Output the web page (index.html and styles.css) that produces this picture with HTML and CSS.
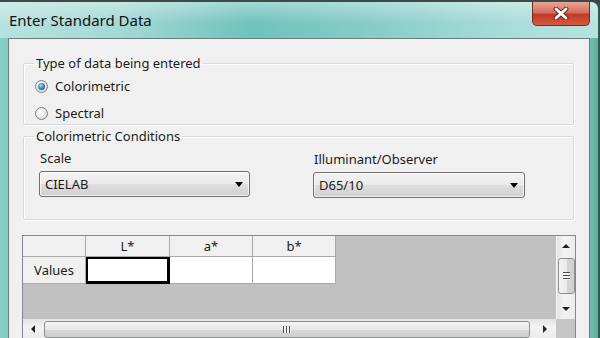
FILE: index.html
```html
<!DOCTYPE html>
<html lang="en">

<head>
    <meta charset="UTF-8">
    <meta name="viewport" content="width=device-width, initial-scale=1.0">
    <title>Enter Standard Data</title>
    <link rel="stylesheet" href="styles.css">
</head>

<body>
    <div class="window">
        <div class="titlebar">
            <span class="title">Enter Standard Data</span>
            <button class="close">
                <svg width="16" height="13" viewBox="0 0 16 13">
                    <path d="M3 2 L13 11 M13 2 L3 11" stroke="#6b2a22" stroke-width="4.8" stroke-linecap="round" />
                    <path d="M3 2 L13 11 M13 2 L3 11" stroke="#ffffff" stroke-width="2.8" stroke-linecap="round" />
                </svg>
            </button>
        </div>

        <div class="client">
            <fieldset class="group type-group">
                <legend>Type of data being entered</legend>
                <label class="radio-row"><span class="radio checked"></span>Colorimetric</label>
                <label class="radio-row"><span class="radio"></span>Spectral</label>
            </fieldset>

            <fieldset class="group cond-group">
                <legend>Colorimetric Conditions</legend>
                <div class="fields">
                    <div class="field">
                        <div class="field-label">Scale</div>
                        <div class="combo">CIELAB<span class="caret"></span></div>
                    </div>
                    <div class="field second">
                        <div class="field-label">Illuminant/Observer</div>
                        <div class="combo">D65/10<span class="caret"></span></div>
                    </div>
                </div>
            </fieldset>

            <div class="grid">
                <div class="sheet">
                    <div class="cells">
                        <div class="cell head"></div>
                        <div class="cell head">L*</div>
                        <div class="cell head">a*</div>
                        <div class="cell head">b*</div>
                        <div class="cell head row-head">Values</div>
                        <div class="cell value selected"></div>
                        <div class="cell value"></div>
                        <div class="cell value"></div>
                    </div>
                </div>
                <div class="vscroll">
                    <span class="arrow up"></span>
                    <div class="vthumb"><span class="grip-v"></span></div>
                    <span class="arrow down"></span>
                </div>
                <div class="hscroll">
                    <span class="arrow left"></span>
                    <div class="hthumb"><span class="grip-h"></span></div>
                    <span class="arrow right"></span>
                </div>
                <div class="corner"></div>
            </div>
        </div>
    </div>
</body>

</html>
```

FILE: styles.css
```css
* {
    margin: 0;
    padding: 0;
    box-sizing: border-box;
}

body {
    width: 600px;
    height: 338px;
    overflow: hidden;
    background: #3a4848;
    font-family: "Noto Sans", "Open Sans", sans-serif;
    font-size: 13px;
    color: #1b1b1b;
}

.window {
    height: 345px;
    display: flex;
    flex-direction: column;
    border-top: 2px solid #3c4a4a;
    border-right: 2px solid #2c5a4e;
    border-top-right-radius: 9px;
    background: linear-gradient(to right, #86cfc6 0%, #7ccac1 2%, #93d4cd 50%, #8bd3cb 97%, #5fae9f 100%);
}

/* title bar */
.titlebar {
    height: 36px;
    display: flex;
    align-items: flex-start;
    padding: 0 8px 0 9px;
    background:
        linear-gradient(to bottom, rgba(255, 255, 255, 0.35), rgba(255, 255, 255, 0) 60%),
        linear-gradient(to right, #b8e2df 0%, #a4d9d5 20%, #6fc2bd 42%, #84cbc7 60%, #a9dcd9 85%, #b6e3e0 100%);
    border-top-right-radius: 7px;
}

.title {
    margin-top: 9px;
    font-size: 15px;
    line-height: 18px;
    color: #111;
}

.close {
    margin-left: auto;
    width: 58px;
    height: 24px;
    display: flex;
    align-items: center;
    justify-content: center;
    border: 1px solid #6e2f28;
    border-top: none;
    border-radius: 0 0 5px 5px;
    background: linear-gradient(to bottom, #e9a598 0%, #d8705f 45%, #c03a25 55%, #d65a40 100%);
}

/* client area */
.client {
    flex: 1;
    display: flex;
    flex-direction: column;
    margin: 0 8px 0 8px;
    border: 1px solid #6c7d80;
    border-bottom: none;
    background: #f0f0f0;
}

.group {
    margin: 16px 15px 0 14px;
    padding: 0 14px 0 10px;
    border: 1px solid #d5dadd;
    border-radius: 2px;
    box-shadow: inset 1px 1px 0 #fff, 1px 1px 0 #fff;
}

.group legend {
    padding: 0 2px;
    line-height: 16px;
}

.type-group {
    padding-top: 4px;
    display: flex;
    flex-direction: column;
    gap: 5px;
}

.radio-row {
    height: 22px;
    display: flex;
    align-items: center;
    gap: 7px;
    padding-left: 1px;
}

.radio {
    width: 13px;
    height: 13px;
    border-radius: 50%;
    border: 1px solid #7f7f7f;
    background: radial-gradient(circle at 35% 35%, #ffffff 0%, #e8e8e8 50%, #cfcfcf 100%);
    display: flex;
    align-items: center;
    justify-content: center;
}

.radio.checked::after {
    content: "";
    width: 7px;
    height: 7px;
    border-radius: 50%;
    background: radial-gradient(circle at 40% 35%, #a6def8 0%, #3e8cc4 45%, #134d7f 100%);
}

.cond-group {
    margin-top: 3px;
    padding: 6px 14px 21px 10px;
}

.fields {
    display: flex;
    gap: 63px;
    padding-left: 5px;
}

.field {
    width: 211px;
}

.field.second {
    width: 212px;
    padding-top: 1px;
}

.field-label {
    line-height: 16px;
    padding-left: 1px;
    margin-bottom: 5px;
}

.combo {
    height: 26px;
    display: flex;
    align-items: center;
    padding-left: 5px;
    border: 1px solid #707070;
    border-radius: 3px;
    background: linear-gradient(to bottom, #f3f3f3 0%, #ebebeb 48%, #dedede 52%, #d0d0d0 100%);
    box-shadow: inset 0 0 0 1px rgba(255, 255, 255, 0.7);
}

.caret {
    margin-left: auto;
    margin-right: 6px;
    width: 0;
    height: 0;
    border-left: 4px solid transparent;
    border-right: 4px solid transparent;
    border-top: 5px solid #000;
}

/* data grid */
.grid {
    margin: 15px 13px 0 13px;
    display: grid;
    grid-template-columns: 1fr 19px;
    grid-template-rows: 83px 20px;
    border: 1px solid #828790;
}

.sheet {
    background: #c1c1c1;
}

.cells {
    display: grid;
    grid-template-columns: 63px 84px 83px 83px;
    grid-template-rows: 21px 27px;
    width: max-content;
}

.cell {
    border-right: 1px solid #a9a9a9;
    border-bottom: 1px solid #a9a9a9;
    display: flex;
    align-items: center;
    justify-content: center;
}

.head {
    background: #f0f0f0;
    line-height: 14px;
}

.value {
    background: #fff;
}

.selected {
    box-shadow: inset 0 0 0 2px #000;
    border-color: #000;
}

.vscroll {
    display: flex;
    flex-direction: column;
    align-items: center;
    background: linear-gradient(to right, #e3e3e3, #f3f3f3 40%, #ececec);
    border-left: 1px solid #f8f8f8;
}

.hscroll {
    display: flex;
    align-items: center;
    background: linear-gradient(to bottom, #e3e3e3, #f3f3f3 40%, #ececec);
}

.corner {
    background: #c6c6c6;
}

.arrow {
    width: 0;
    height: 0;
}

.arrow.up {
    margin: 8px 0 0;
    border-left: 4px solid transparent;
    border-right: 4px solid transparent;
    border-bottom: 4px solid #222;
}

.arrow.down {
    margin: auto 0 8px;
    border-left: 4px solid transparent;
    border-right: 4px solid transparent;
    border-top: 4px solid #222;
}

.arrow.left {
    margin: 0 0 0 8px;
    border-top: 4px solid transparent;
    border-bottom: 4px solid transparent;
    border-right: 4px solid #222;
}

.arrow.right {
    margin: 0 9px 0 auto;
    border-top: 4px solid transparent;
    border-bottom: 4px solid transparent;
    border-left: 4px solid #222;
}

.vthumb {
    margin-top: 10px;
    width: 17px;
    height: 36px;
    border: 1px solid #8e8f8f;
    border-radius: 3px;
    background: linear-gradient(to right, #f4f4f4, #e9e9e9 50%, #d6d6d6 51%, #cfcfcf);
    display: flex;
    align-items: center;
    justify-content: center;
}

.grip-v {
    width: 7px;
    height: 8px;
    background: repeating-linear-gradient(to bottom, #4a4a4a 0 1px, #f4f4f4 1px 3px);
}

.hthumb {
    margin-left: 9px;
    width: 486px;
    height: 17px;
    border: 1px solid #8e8f8f;
    border-radius: 3px;
    background: linear-gradient(to bottom, #f4f4f4, #e9e9e9 50%, #d6d6d6 51%, #cfcfcf);
    display: flex;
    align-items: center;
    justify-content: center;
}

.grip-h {
    width: 8px;
    height: 7px;
    background: repeating-linear-gradient(to right, #4a4a4a 0 1px, #f4f4f4 1px 3px);
}
```
